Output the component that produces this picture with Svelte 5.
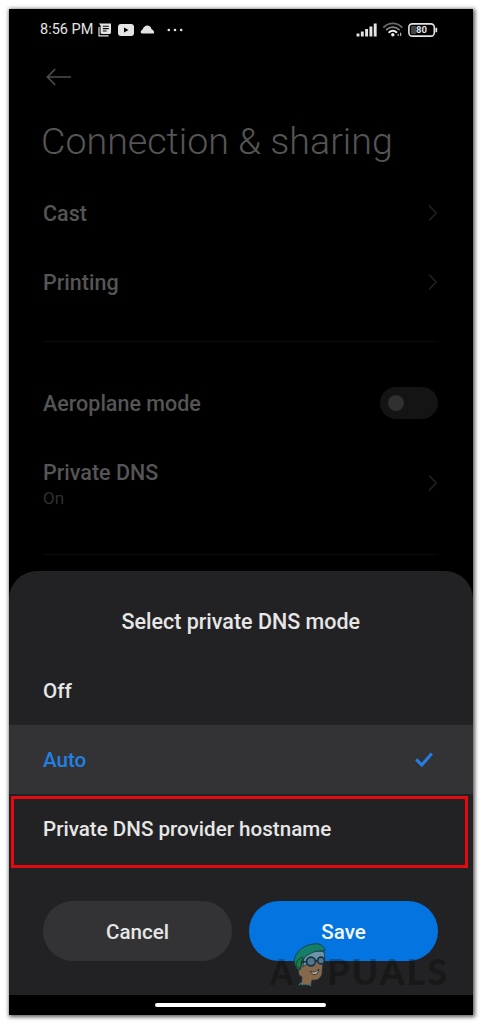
<script lang="ts">
  interface Option {
    id: string;
    label: string;
  }

  const options: Option[] = [
    { id: 'off', label: 'Off' },
    { id: 'auto', label: 'Auto' },
    { id: 'hostname', label: 'Private DNS provider hostname' }
  ];

  let selected = $state('auto');
  let airplane = $state(false);
</script>

{#snippet chevron()}
  <svg class="chevron" width="12" height="18" viewBox="0 0 12 18">
    <path d="M3 1.5 10.2 9 3 16.5" fill="none" stroke="currentColor" stroke-width="1.7" />
  </svg>
{/snippet}

<div class="page">
  <div class="phone">
    <header class="status">
      <span class="clock">8:56 PM</span>
      <svg class="news" width="13" height="14" viewBox="0 0 13 14">
        <path d="M1 4v8.9h9.5" fill="none" stroke="currentColor" stroke-width="1.2" />
        <path d="M.8.6H13v9.2l-1 1.2H3.6l-1-1V2.4z" fill="currentColor" />
        <path d="M4.8 3.2h6M4.8 5.6h6M4.8 8h3.8" stroke="#000" stroke-width="1.1" />
      </svg>
      <svg class="video" width="16" height="12" viewBox="0 0 16 12">
        <rect width="16" height="12" rx="3" fill="currentColor" />
        <path d="M6 3.5v5L10.5 6z" fill="#000" />
      </svg>
      <svg class="cloud" width="15" height="9" viewBox="0 0 15 9">
        <path d="M1.6 8.6a2 2 0 0 1 .6-3.6C3.4 2.2 5.2.6 7.3.6c2.2 0 3.8 1.6 4.3 3.6 2 .4 3 2.8 2.2 4.4z" fill="currentColor" />
      </svg>
      <svg class="dots" width="16" height="4" viewBox="0 0 16 4">
        <circle cx="1.8" cy="2" r="1.3" fill="currentColor" />
        <circle cx="8" cy="2" r="1.3" fill="currentColor" />
        <circle cx="14.2" cy="2" r="1.3" fill="currentColor" />
      </svg>

      <div class="status-right">
        <svg width="22" height="14" viewBox="0 0 22 14">
          <path d="M2 10.4V13.4M6.3 8.4v5M10.6 6v7.4M14.9 3.4v10M19.2.6v12.8" stroke="currentColor" stroke-width="2.9" />
        </svg>
        <svg width="20" height="15" viewBox="0 0 20 15" fill="none" stroke-linecap="round">
          <path d="M1 5a12.6 12.6 0 0 1 17.6 0" stroke="#6a6a6a" stroke-width="1.8" />
          <path d="M3.6 7.6a9 9 0 0 1 12.4 0" stroke="#858585" stroke-width="1.8" />
          <path d="M6.2 10.2a5.4 5.4 0 0 1 7.2 0" stroke="#eee" stroke-width="2" />
          <circle cx="9.8" cy="12.8" r="1.7" fill="#eee" />
          <path d="M15.2 13.4v-1M17.6 13.4v-2.2" stroke="#aaa" stroke-width="1.3" />
        </svg>
        <svg width="30" height="14" viewBox="0 0 30 14">
          <rect x="0.9" y="0.9" width="25.4" height="12.2" rx="3.4" fill="none" stroke="currentColor" stroke-width="1.6" />
          <rect x="3" y="3" width="5" height="8" rx="1" fill="#444" />
          <path d="M28.3 4.8v4.4" stroke="currentColor" stroke-width="1.8" />
          <text class="level" x="13.4" y="10.4" text-anchor="middle">80</text>
        </svg>
      </div>
    </header>

    <main class="settings">
      <svg class="back" width="26" height="18" viewBox="0 0 26 18">
        <path d="M9.2 1 1.4 9l7.8 8M1.4 9H25" fill="none" stroke="currentColor" stroke-width="1.7" />
      </svg>
      <h1>Connection &amp; sharing</h1>

      <div class="item">
        <span class="name">Cast</span>
        {@render chevron()}
      </div>
      <div class="item">
        <span class="name">Printing</span>
        {@render chevron()}
      </div>
      <hr class="first" />
      <div class="item">
        <span class="name">Aeroplane mode</span>
        <button class="switch" class:on={airplane} aria-label="Aeroplane mode" onclick={() => (airplane = !airplane)}>
          <i></i>
        </button>
      </div>
      <div class="item double">
        <div class="labels">
          <span>Private DNS</span>
          <small>On</small>
        </div>
        {@render chevron()}
      </div>
      <hr class="second" />
    </main>

    <section class="sheet">
      <h2>Select private DNS mode</h2>
      <div class="options">
        {#each options as option}
          <button class="option" class:selected={selected === option.id} onclick={() => (selected = option.id)}>
            <span>{option.label}</span>
            {#if selected === option.id}
              <svg width="18" height="15" viewBox="0 0 18 15">
                <path d="M1.2 7.4 6.8 13 16.8 1.6" fill="none" stroke="currentColor" stroke-width="3" />
              </svg>
            {/if}
          </button>
        {/each}
        <div class="highlight"></div>
      </div>
      <div class="actions">
        <button class="cancel">Cancel</button>
        <button class="save">Save</button>
      </div>

      <svg class="watermark" width="190" height="52" viewBox="0 0 190 52">
        <g class="letters">
          <text x="1" y="42.5" textLength="23" lengthAdjust="spacingAndGlyphs">A</text>
          <text x="58" y="42.5" textLength="120" lengthAdjust="spacing">PUALS</text>
        </g>
        <g stroke="#17343b" stroke-width="0.8" stroke-linejoin="round">
          <path d="M31 21 29 27l1 6 3 2-1 8h10l1-5c5 1 9-2 10-6l1-13-7-5z" fill="#86694d" />
          <path d="M35 13c5-4 14-5 20-3l1 7-4 4-5-3-8 3-5 4z" fill="#6d93a7" />
          <path d="M26 23c-3-9 5-19 18-21 6-1 11 1 12 7-9-1-15 2-20 6-3 3-3 8-5 13l-3-1z" fill="#147e69" />
          <path d="M27 24c0-5 3-8 7-9l-3 12z" fill="#15813f" />
        </g>
        <g fill="none" stroke="#123249" stroke-width="1.6">
          <circle cx="42" cy="19.5" r="4.4" fill="#55758b" />
          <circle cx="52" cy="18.5" r="3.4" fill="#55758b" />
          <path d="m46.4 19 2.2-.4M37.6 19.5l-6 1" />
        </g>
        <path d="M41 29c3 2 6 1 9-2-1 6-6 8-9 2z" fill="#b7b6ad" stroke="#292620" stroke-width="0.9" />
        <path d="m30 43 2-2 2 2M38 43l2-1 2 2" fill="none" stroke="#427889" stroke-width="1.1" />
      </svg>
    </section>

    <footer class="navbar">
      <span class="home"></span>
    </footer>
  </div>
</div>

<style>
  :global(body) {
    margin: 0;
    background: #fff;
    font-family: Roboto, 'Liberation Sans', sans-serif;
  }

  .page {
    box-sizing: border-box;
    height: 1024px;
    padding: 9px 9.5px 9.5px 9px;
    overflow: hidden;
  }

  .phone {
    height: 100%;
    display: flex;
    flex-direction: column;
    background: #000;
    box-shadow: 1px 1px 4px 1px rgba(0, 0, 0, 0.65);
  }

  button {
    border: none;
    padding: 0;
    font: inherit;
    cursor: pointer;
  }

  /* Status bar */
  .status {
    display: flex;
    align-items: center;
    height: 41px;
    padding: 0 35px 0 31px;
    color: #e4e4e4;
  }

  .clock {
    width: 53px;
    font-size: 14.5px;
    white-space: nowrap;
  }

  .news {
    margin-left: 5px;
  }

  .video {
    margin-left: 7px;
  }

  .cloud {
    margin-left: 6px;
  }

  .dots {
    margin-left: 12px;
  }

  .status-right {
    display: flex;
    align-items: center;
    gap: 5px;
    margin-left: auto;
  }

  .level {
    font-size: 9.5px;
    font-weight: 700;
    fill: #e4e4e4;
  }

  /* Dimmed settings list */
  .settings {
    height: 521px;
    padding: 0 34.5px 0 34px;
    color: #555;
    font-size: 21.5px;
    font-weight: 500;
  }

  .back {
    display: block;
    margin: 18px 0 0 3px;
    color: #4c4c4c;
  }

  h1 {
    margin: 31px 0 0 -2px;
    height: 48px;
    font-size: 37.6px;
    line-height: 48px;
    font-weight: 300;
    white-space: nowrap;
  }

  .item {
    display: flex;
    align-items: center;
    justify-content: space-between;
    height: 69px;
  }

  h1 + .item {
    margin-top: 13px;
  }

  .name {
    padding-top: 2px;
  }

  .chevron {
    color: #202020;
  }

  hr {
    border: none;
    height: 1px;
    background: #0b0b0b;
  }

  .first {
    margin: 25px 0 26px;
  }

  .double {
    height: 91px;
  }

  .labels {
    display: flex;
    flex-direction: column;
    gap: 3px;
    padding-top: 2px;
  }

  small {
    font-size: 17px;
    font-weight: 400;
    color: #303030;
  }

  .second {
    margin: 26px 0 0;
  }

  .switch {
    display: flex;
    align-items: center;
    width: 58px;
    height: 32px;
    padding: 0 8px;
    border-radius: 16px;
    background: #141414;
  }

  .switch i {
    width: 16px;
    height: 16px;
    border-radius: 50%;
    background: #303030;
  }

  .switch.on {
    justify-content: flex-end;
  }

  /* Bottom sheet */
  .sheet {
    position: relative;
    height: 424px;
    background: #222224;
    border-radius: 28px 28px 0 0;
    color: #e6e6e6;
    font-size: 20.6px;
    font-weight: 500;
  }

  h2 {
    margin: 0;
    height: 85px;
    padding-top: 39px;
    box-sizing: border-box;
    font-size: 21.5px;
    line-height: 24px;
    font-weight: 500;
    text-align: center;
  }

  .options {
    position: relative;
  }

  .option {
    display: flex;
    align-items: center;
    justify-content: space-between;
    width: 100%;
    height: 69px;
    padding: 0 40px 0 34px;
    background: none;
    color: inherit;
  }

  .option.selected {
    background: #333335;
    color: #2280e4;
  }

  /* Red frame over the last option */
  .highlight {
    position: absolute;
    left: 2px;
    right: 5px;
    top: 140px;
    height: 72px;
    box-sizing: border-box;
    border: 3px solid #e30b10;
    pointer-events: none;
  }

  .actions {
    display: grid;
    grid-template-columns: 1fr 1fr;
    gap: 17px;
    padding: 38px 34.5px 0 34px;
  }

  .actions button {
    height: 60px;
    padding-top: 1px;
    border-radius: 30px;
    color: #e6e6e6;
  }

  .actions .cancel {
    background: #333335;
  }

  .actions .save {
    background: #0374e0;
    color: #f4f8fd;
  }

  .watermark {
    position: absolute;
    left: 260px;
    top: 371px;
    pointer-events: none;
  }

  .letters {
    font-family: Lato, sans-serif;
    font-size: 36px;
    font-weight: 900;
    fill: rgba(0, 0, 0, 0.28);
  }

  .navbar {
    display: flex;
    justify-content: center;
    flex: 1;
    padding-top: 8px;
  }

  .home {
    width: 171px;
    height: 4px;
    border-radius: 2px;
    background: #fff;
  }
</style>
